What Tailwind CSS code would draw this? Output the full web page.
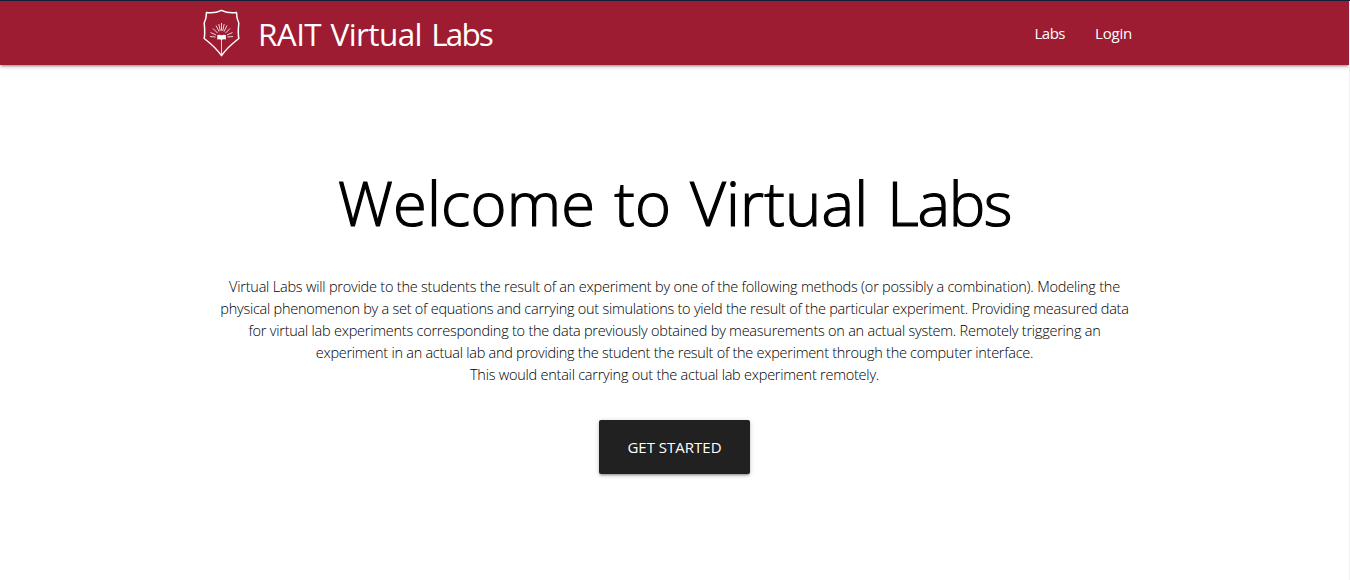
<!DOCTYPE html>
<html lang="en">
<head>
<meta charset="utf-8">
<title>RAIT Virtual Labs</title>
<script src="https://cdn.jsdelivr.net/npm/@tailwindcss/browser@4"></script>
</head>
<body class="h-[580px] overflow-hidden bg-white font-['Open_Sans','Noto_Sans',sans-serif] text-black">
<div class="flex h-full flex-col border-t border-[#14213d]">
  <div class="flex h-full">
  <div class="min-w-0 flex-1">
  <nav class="h-16 bg-[#9e1c32] text-white shadow-[0_2px_2px_0_rgba(0,0,0,0.14),0_3px_1px_-2px_rgba(0,0,0,0.12),0_1px_5px_0_rgba(0,0,0,0.2)]">
    <div class="flex h-16 items-center pl-[202px] pr-[217px] pt-px">
      <svg class="mb-px h-12 w-[38px] shrink-0" viewBox="0 0 38 48" fill="none" stroke="#fff" stroke-linejoin="round">
        <path d="M4.500 3.500C9 4.200 15 3.600 19.500 1.300C24 3.600 30 4.200 34.500 3.500C34.500 8 35.300 11 36.800 14C36.200 20 36 25 36.800 29.500C31 34 24 40 19.500 46.700C15 40 8 34 2.200 29.500C3 25 2.800 20 2.200 14C3.700 11 4.500 8 4.500 3.500Z" stroke-width="1.500"/>
        <path d="M15.300 26Q17.500 25.300 19.500 26.200Q21.500 25.300 23.900 26V30.500Q21.500 30 19.500 30.800Q17.500 30 15.300 30.500Z" fill="#fff" stroke="none"/>
        <path d="M19.500 30V46" stroke-width=".8"/>
        <path d="M8 27.500L13.500 28M8.500 23.500L14 26M11 19.500L15.500 24M14 16.500L17 22.500M16.800 15L18.300 22M19.500 14V21.500M22.200 15L20.700 22M25 16.500L22 22.500M28 19.500L23.500 24M30.500 23.500L25 26M31 27.500L25.500 28" stroke-width=".8"/>
      </svg>
      <a class="ml-[18px] whitespace-nowrap text-[31.500px] leading-none [word-spacing:1.800px]"><span class="tracking-[-0.600px]">RAIT Virtual </span><span class="tracking-[-1.900px]">Labs</span></a>
      <div class="ml-auto flex gap-[30px] pb-px text-[15px]"><a class="tracking-[-0.5px]">Labs</a><a class="tracking-[-0.2px]">Login</a></div>
    </div>
  </nav>
  <main class="flex flex-col items-center text-center">
    <h1 class="mt-[102px] whitespace-nowrap text-[61.500px] font-light leading-[70px] [word-spacing:2.800px] [-webkit-text-stroke:1.200px_#000]"><span class="tracking-[0.2px]">Welcome to Virtual </span><span class="tracking-[-1.400px]">Labs</span></h1>
    <p class="mt-[39px] whitespace-nowrap text-[14.500px] font-light leading-[22px]">
      <span class="tracking-[-0.215px]">Virtual Labs will provide to the students the result of an experiment by one of the following methods (or possibly a combination). Modeling the</span><br>
      <span class="tracking-[-0.25px]">physical phenomenon by a set of equations and carrying out simulations to yield the result of the particular experiment. Providing measured data</span><br>
      <span class="tracking-[-0.24px]">for virtual lab experiments corresponding to the data previously obtained by measurements on an actual system. Remotely triggering an</span><br>
      <span class="tracking-[-0.27px]">experiment in an actual lab and providing the student the result of the experiment through the computer interface.</span><br>
      <span class="tracking-[-0.24px]">This would entail carrying out the actual lab experiment remotely.</span>
    </p>
    <a class="mt-[34px] flex h-[54px] w-[151px] items-center justify-center rounded-[2px] bg-[#212121] text-[15px] text-white shadow-[0_2px_2px_0_rgba(0,0,0,0.14),0_3px_1px_-2px_rgba(0,0,0,0.12),0_1px_5px_0_rgba(0,0,0,0.2)]">GET STARTED</a>
  </main>
  </div>
  <div class="w-px bg-[#f1f1f1]"></div>
  </div>
</div>
</body>
</html>
